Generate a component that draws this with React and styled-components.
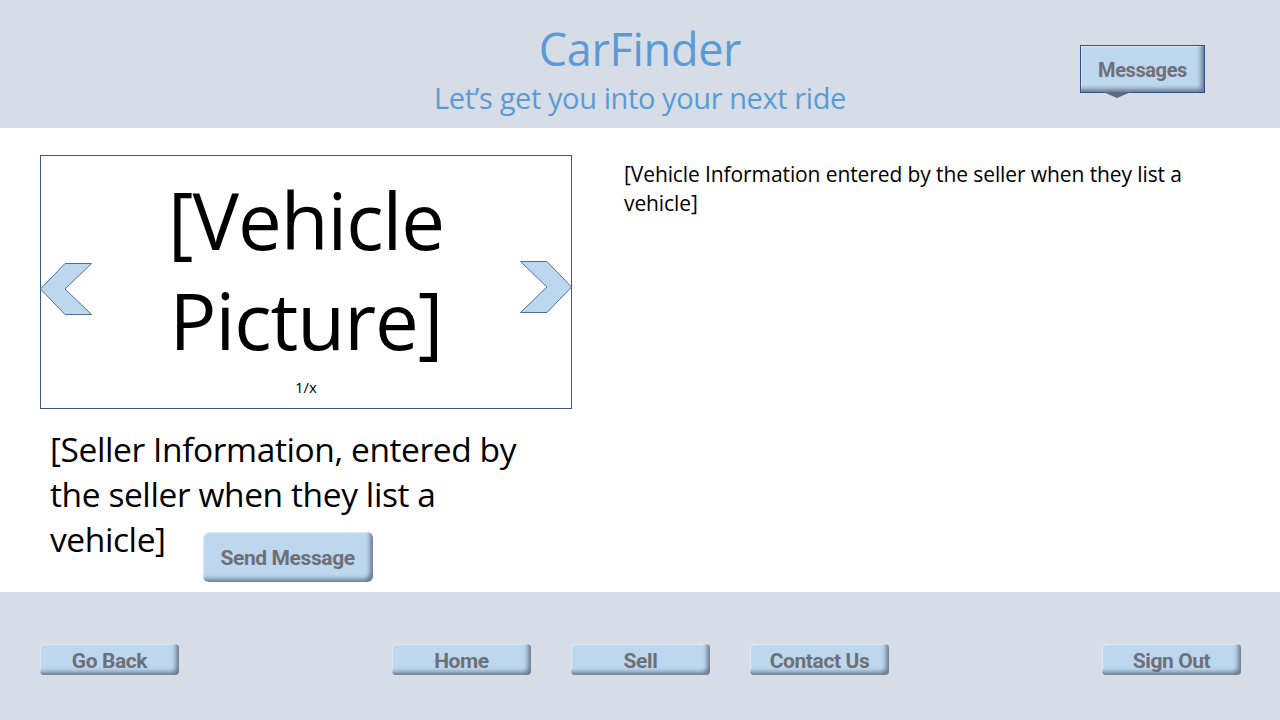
import React from "react";
import styled, { createGlobalStyle } from "styled-components";

const GlobalStyle = createGlobalStyle`
  html, body {
    margin: 0;
    padding: 0;
    background: #ffffff;
  }
  body {
    font-family: "Open Sans", "Noto Sans", sans-serif;
  }
`;

const NAV = ["Home", "Sell", "Contact Us"];

const App = () => {
  /** UI */
  return (
    <>
      <GlobalStyle />
      <Page>
        <Header>
          <TitleBlock>
            <Title>CarFinder</Title>
            <Subtitle>Let’s get you into your next ride</Subtitle>
          </TitleBlock>
          <MessagesButton>Messages</MessagesButton>
        </Header>

        <Main>
          <LeftColumn>
            <PictureBox>
              <Arrow $side="left">
                <svg width="52" height="52" viewBox="0 0 52 52">
                  <polygon
                    points="25,0.5 51.5,0.5 25,26 51.5,51.5 25,51.5 0.5,26"
                    fill="#bdd7ee"
                    stroke="#4f6fa0"
                    strokeWidth="1"
                  />
                </svg>
              </Arrow>
              <PictureText>
                [Vehicle
                <br />
                Picture]
              </PictureText>
              <Counter>1/x</Counter>
              <Arrow $side="right">
                <svg width="52" height="52" viewBox="0 0 52 52">
                  <polygon
                    points="0.5,0.5 27,0.5 51.5,26 27,51.5 0.5,51.5 27,26"
                    fill="#bdd7ee"
                    stroke="#4f6fa0"
                    strokeWidth="1"
                  />
                </svg>
              </Arrow>
            </PictureBox>
            <SellerBlock>
              <SellerText>
                [Seller Information, entered by the seller when they list a
              </SellerText>
              <SellerLastRow>
                <SellerText>vehicle]</SellerText>
                <SendButton>Send Message</SendButton>
              </SellerLastRow>
            </SellerBlock>
          </LeftColumn>
          <InfoText>
            [Vehicle Information entered by the seller when they list a
            vehicle]
          </InfoText>
        </Main>

        <Footer>
          <FooterSide>
            <NavButton>Go Back</NavButton>
          </FooterSide>
          <FooterCenter>
            {NAV.map((label) => (
              <NavButton key={label}>{label}</NavButton>
            ))}
          </FooterCenter>
          <FooterSide $end>
            <NavButton>Sign Out</NavButton>
          </FooterSide>
        </Footer>
      </Page>
    </>
  );
};

export default App;

/** styled component */
const Page = styled.div`
  width: 1280px;
  height: 720px;
  display: flex;
  flex-direction: column;
  overflow: hidden;
`;

const Header = styled.header`
  position: relative;
  height: 128px;
  background-color: #d6dde6;
  display: flex;
  justify-content: center;
`;

const TitleBlock = styled.div`
  display: flex;
  flex-direction: column;
  align-items: center;
  padding-top: 22px;
`;

const Title = styled.h1`
  margin: 0;
  font-family: "Open Sans", sans-serif;
  font-weight: 400;
  font-size: 45px;
  line-height: 54px;
  color: #5b9bd5;
  letter-spacing: -0.3px;
`;

const Subtitle = styled.p`
  margin: 2px 0 0;
  font-family: "Open Sans", sans-serif;
  font-size: 29px;
  line-height: 40px;
  color: #5b9bd5;
  letter-spacing: -0.4px;
`;

const bevel = `
  background-color: #bdd7ee;
  border: none;
  color: #6f6f78;
  font-family: "Roboto", "Liberation Sans", sans-serif;
  font-weight: 700;
  letter-spacing: -0.4px;
  cursor: pointer;
  box-shadow: inset -4px -4px 4px -1px rgba(40, 50, 70, 0.55),
    inset 1px 1px 1px rgba(255, 255, 255, 0.5);
`;

const MessagesButton = styled.button`
  ${bevel}
  position: absolute;
  left: 1080px;
  top: 45px;
  width: 125px;
  height: 48px;
  font-size: 20px;
  border: 1px solid #2f4f80;
  padding: 2px 0 0;
  &::after {
    content: "";
    position: absolute;
    left: 22px;
    bottom: -6px;
    border-left: 14px solid transparent;
    border-right: 14px solid transparent;
    border-top: 6px solid #5c6a84;
  }
`;

const Main = styled.main`
  height: 464px;
  background: #ffffff;
  display: flex;
  gap: 52px;
  padding: 27px 0 0 40px;
  box-sizing: border-box;
`;

const LeftColumn = styled.div`
  width: 532px;
  display: flex;
  flex-direction: column;
`;

const PictureBox = styled.div`
  position: relative;
  height: 254px;
  border: 1px solid #3b5785;
  box-sizing: border-box;
  display: flex;
  flex-direction: column;
  align-items: center;
`;

const Arrow = styled.div`
  position: absolute;
  top: ${(p) => (p.$side === "left" ? "107px" : "105px")};
  ${(p) => (p.$side === "left" ? "left: -1px;" : "right: -1px;")}
  width: 52px;
  height: 52px;
  svg {
    display: block;
  }
`;

const PictureText = styled.div`
  margin-top: 14px;
  font-family: "Open Sans", sans-serif;
  font-size: 78px;
  line-height: 100px;
  text-align: center;
  color: #000;
  letter-spacing: -1px;
`;

const Counter = styled.div`
  margin-top: 7px;
  font-family: "Open Sans", sans-serif;
  font-size: 15px;
  color: #000;
`;

const SellerBlock = styled.div`
  padding: 18px 0 0 10px;
  width: 500px;
`;

const SellerText = styled.p`
  margin: 0;
  font-family: "Open Sans", sans-serif;
  font-size: 33.5px;
  line-height: 45px;
  color: #000;
  letter-spacing: -0.4px;
`;

const SellerLastRow = styled.div`
  display: flex;
  align-items: flex-start;
  gap: 37px;
`;

const SendButton = styled.button`
  ${bevel}
  margin-top: 15px;
  width: 170px;
  height: 50px;
  border-radius: 6px;
  font-size: 21px;
  padding: 2px 0 0;
`;

const InfoText = styled.p`
  margin: 5px 0 0;
  width: 600px;
  font-family: "Open Sans", sans-serif;
  font-size: 21px;
  line-height: 29px;
  color: #000;
  letter-spacing: -0.1px;
`;

const Footer = styled.footer`
  height: 128px;
  background-color: #d6dde6;
  display: grid;
  grid-template-columns: 1fr auto 1fr;
  align-items: center;
  padding: 6px 39px 0 40px;
  box-sizing: border-box;
`;

const FooterSide = styled.div`
  display: flex;
  justify-content: ${(p) => (p.$end ? "flex-end" : "flex-start")};
`;

const FooterCenter = styled.div`
  display: flex;
  gap: 40px;
`;

const NavButton = styled.button`
  ${bevel}
  width: 139px;
  height: 31px;
  border-radius: 4px;
  font-size: 21px;
  padding: 3px 0 0;
  line-height: 28px;
`;
